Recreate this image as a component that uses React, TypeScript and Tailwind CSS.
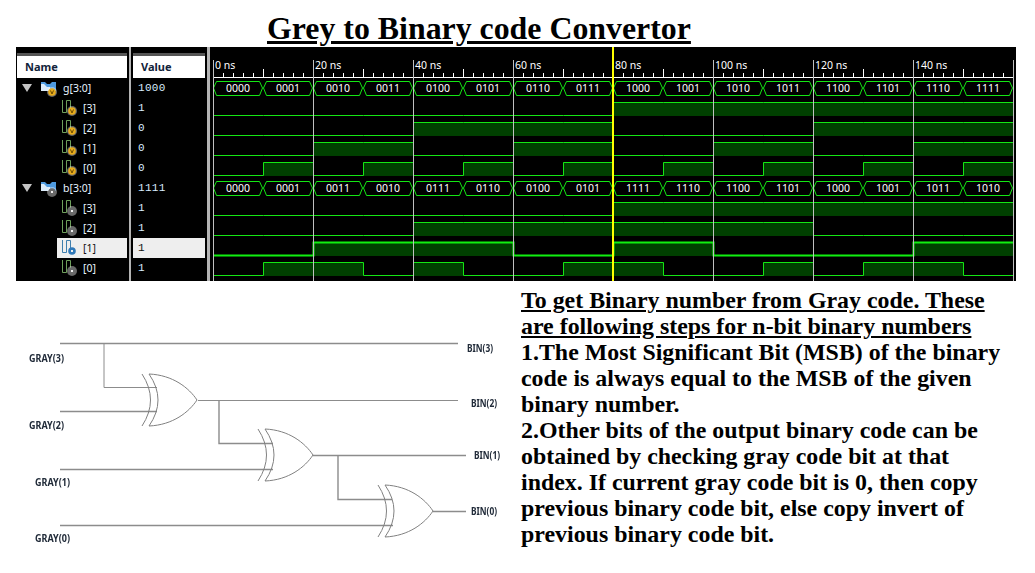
const GRAY = ['0000', '0001', '0010', '0011', '0100', '0101', '0110', '0111', '1000', '1001', '1010', '1011', '1100', '1101', '1110', '1111'];
const BIN = ['0000', '0001', '0011', '0010', '0111', '0110', '0100', '0101', '1111', '1110', '1100', '1101', '1000', '1001', '1011', '1010'];

const X0 = 213;
const STEP = 50;

type Row = { label: string; value: string; bus?: boolean; kind: 'g' | 'b'; selected?: boolean };

const rows: Row[] = [
  { label: 'g[3:0]', value: '1000', bus: true, kind: 'g' },
  { label: '[3]', value: '1', kind: 'g' },
  { label: '[2]', value: '0', kind: 'g' },
  { label: '[1]', value: '0', kind: 'g' },
  { label: '[0]', value: '0', kind: 'g' },
  { label: 'b[3:0]', value: '1111', bus: true, kind: 'b' },
  { label: '[3]', value: '1', kind: 'b' },
  { label: '[2]', value: '1', kind: 'b' },
  { label: '[1]', value: '1', kind: 'b', selected: true },
  { label: '[0]', value: '1', kind: 'b' },
];

function Coin({ kind, cx, cy, selected }: { kind: 'g' | 'b'; cx: number; cy: number; selected?: boolean }) {
  const fill = selected ? '#2f78b8' : kind === 'g' ? '#e8ac1c' : '#6a6a6a';
  return (
    <g>
      {!selected && <circle cx={cx} cy={cy} r="5" fill="#fff" opacity="0.4" />}
      <circle cx={cx} cy={cy} r="3.8" fill={fill} />
      {kind === 'g' ? (
        <path d={`M${cx - 1.5} ${cy - 1.5}L${cx} ${cy + 2}L${cx + 1.5} ${cy - 1.5}`} fill="none" stroke="#6b4a00" strokeWidth="1" />
      ) : (
        <rect x={cx - 1} y={cy - 1} width="2" height="2" fill="#eee" />
      )}
    </g>
  );
}

function BusIcon({ kind }: { kind: 'g' | 'b' }) {
  return (
    <svg width="18" height="18" viewBox="0 0 18 18" className="shrink-0">
      <path d="M1 3h4l2 2h3l2-2h4v9H1z" fill="#4f9be0" />
      <path d="M1 5h3l3 3h3v4H1z" fill="#dcecfa" />
      <Coin kind={kind} cx={12} cy={13} />
    </svg>
  );
}

function BitIcon({ kind, selected }: { kind: 'g' | 'b'; selected?: boolean }) {
  const line = selected ? '#3f7fae' : '#6fa05c';
  return (
    <svg width="18" height="18" viewBox="0 0 18 18" className="shrink-0">
      <path d="M2.5 1V13.5H6.5V1.5H10.5V10" fill="none" stroke={line} strokeWidth="1" />
      <Coin kind={kind} cx={12} cy={12} selected={selected} />
    </svg>
  );
}

function NameCell({ row }: { row: Row }) {
  return (
    <div className={`flex h-5 items-center ${row.bus ? 'pl-[5px]' : 'pl-[40px]'}`}>
      {row.bus ? (
        <>
          <span className="mr-[8px] h-0 w-0 border-x-[5px] border-t-[8px] border-x-transparent border-t-[#c4c4c4]" />
          <BusIcon kind={row.kind} />
          <span className="ml-[5px] pt-px text-[#e8f4ff]">{row.label}</span>
        </>
      ) : (
        <div className={`flex h-5 w-[70px] items-center pl-[3px] ${row.selected ? 'bg-[#eeeeee] text-[#111]' : 'text-[#e8f4ff]'}`}>
          <BitIcon kind={row.kind} selected={row.selected} />
          <span className="ml-[5px] pt-px">{row.label}</span>
        </div>
      )}
    </div>
  );
}

function Bus({ y, values }: { y: number; values: string[] }) {
  return (
    <g>
      {values.map((v, i) => {
        const a = X0 + i * STEP;
        const b = a + STEP;
        return (
          <g key={i}>
            <path
              d={`M${a + 0.5} ${y + 7}L${a + 3.5} ${y + 0.5}H${b - 3.5}L${b - 0.5} ${y + 7}L${b - 3.5} ${y + 14.5}H${a + 3.5}Z`}
              fill="none"
              stroke="#14e614"
            />
            <text x={a + 25} y={y + 11} textAnchor="middle" fontSize="10.5" fill="#fff" className="font-['Noto_Sans']">
              {v}
            </text>
          </g>
        );
      })}
    </g>
  );
}

function Bit({ low, values, bit, thick }: { low: number; values: string[]; bit: number; thick?: boolean }) {
  const high = low - 13;
  let d = '';
  const fills: number[] = [];
  values.forEach((v, i) => {
    const on = v[3 - bit] === '1';
    const x = X0 + i * STEP;
    const y = on ? high : low;
    if (on) fills.push(x);
    d += `${i === 0 ? 'M' : 'L'}${x + 0.5} ${y + 0.5}H${x + STEP + 0.5}`;
  });
  return (
    <g>
      {fills.map((x) => (
        <rect key={x} x={x} y={high} width={STEP} height={14} fill="#004000" />
      ))}
      <path d={d} fill="none" stroke={thick ? '#10f010' : '#14e614'} strokeWidth={thick ? 2 : 1} />
    </g>
  );
}

function Waves() {
  const ticks = Array.from({ length: 81 }, (_, i) => i);
  const majors = Array.from({ length: 9 }, (_, i) => i);
  return (
    <svg viewBox="210 47 806 234" width="806" height="234" className="block shrink-0">
      <rect x="210" y="47" width="806" height="234" fill="#000" />
      {ticks.map((i) => {
        const x = X0 + i * 10 + 0.5;
        const h = i % 5 === 0 ? 8 : 4;
        return <path key={i} d={`M${x} ${77 - h}V77`} stroke="#fff" />;
      })}
      <path d="M213 77.5H1013" stroke="#fff" />
      <Bus y={81} values={GRAY} />
      <Bus y={181} values={BIN} />
      {[3, 2, 1, 0].map((bit, i) => (
        <Bit key={bit} low={115 + i * 20} values={GRAY} bit={bit} />
      ))}
      {[3, 2, 1, 0].map((bit, i) => (
        <Bit key={bit} low={215 + i * 20} values={BIN} bit={bit} thick={bit === 1} />
      ))}
      {majors.map((i) => (
        <path key={i} d={`M${X0 + i * 100 + 0.5} 60V281`} stroke="#c0c0c0" />
      ))}
      {majors.slice(0, 8).map((i) => (
        <text key={i} x={X0 + i * 100 + 2} y={69} fontSize="10.5" fill="#fff" className="font-['Noto_Sans']">
          {i * 20} ns
        </text>
      ))}
      <rect x="612" y="47" width="2" height="234" fill="#ffff00" />
    </svg>
  );
}

function Xor({ x, y }: { x: number; y: number }) {
  // x, y: left top corner of the gate body
  return (
    <g transform={`translate(${x} ${y})`} fill="none" stroke="#808080" strokeWidth="1">
      <path d="M-7 0Q10 26 -7 52" />
      <path d="M0 0Q18 26 0 52" />
      <path d="M0 0C24 1 40 14 48 26C40 38 24 51 0 52" />
    </g>
  );
}

function Schematic() {
  const labels: [string, number, number, number][] = [
    ['GRAY(3)', 29, 362, 35],
    ['GRAY(2)', 29, 429, 35],
    ['GRAY(1)', 35, 486, 35],
    ['GRAY(0)', 35, 542, 35],
    ['BIN(3)', 467, 352, 26],
    ['BIN(2)', 471, 407, 26],
    ['BIN(1)', 474, 459, 26],
    ['BIN(0)', 471, 515, 26],
  ];
  return (
    <svg viewBox="0 288 510 285" width="510" height="285" className="block shrink-0 blur-[0.3px]">
      <g fill="none" stroke="#8c8c8c" strokeWidth="1">
        <path d="M60 343.5H458" strokeWidth="1.5" />
        <path d="M104 343.5V387.5H157" />
        <path d="M60 411.5H157" strokeWidth="1.5" />
        <path d="M198 400.5H458" />
        <path d="M219 400.5V443.5H273" strokeWidth="1.4" />
        <path d="M60 469.5H273" strokeWidth="1.5" />
        <path d="M313 455.5H466" strokeWidth="1.4" />
        <path d="M338 455.5V499.5H392" strokeWidth="1.4" />
        <path d="M60 525.5H393" strokeWidth="1.5" />
        <path d="M433 511.5H466" strokeWidth="1.4" />
      </g>
      <Xor x={149} y={374} />
      <Xor x={265} y={429} />
      <Xor x={385} y={485} />
      {labels.map(([t, x, y, w]) => (
        <text key={t} x={x} y={y} fontSize="10.5" fontWeight="700" fill="#222c3a" textLength={w} lengthAdjust="spacingAndGlyphs" className="font-['Noto_Sans']">
          {t}
        </text>
      ))}
    </svg>
  );
}

export default function App() {
  return (
    <div className="flex h-[573px] w-[1035px] flex-col overflow-hidden bg-white font-['Liberation_Serif',serif] text-black">
      <div className="flex h-[47px] items-end pl-[267px]">
        <h1 className="text-[31.85px] font-bold leading-[36px] whitespace-nowrap underline">Grey to Binary code Convertor</h1>
      </div>

      <div className="ml-4 flex h-[234px] w-[1000px] bg-black pl-px font-['Noto_Sans',sans-serif] text-[10.5px]">
        <div className="w-[110px] shrink-0">
          <div className="mt-[6px] h-[3px] bg-[#555]" />
          <div className="flex h-[22px] items-center bg-white pl-2 text-[11px] font-bold text-[#12233a]">Name</div>
          {rows.map((r, i) => (
            <NameCell key={i} row={r} />
          ))}
        </div>
        <div className="flex h-full w-[6px] justify-center">
          <div className="w-[2px] bg-[#b4b4b4]" />
        </div>
        <div className="w-[72px] shrink-0">
          <div className="mt-[6px] h-[3px] bg-[#555]" />
          <div className="flex h-[22px] items-center bg-white pl-2 text-[11px] font-bold text-[#12233a]">Value</div>
          {rows.map((r, i) => (
            <div
              key={i}
              className={`flex h-5 items-center pl-[5px] pt-px font-['Liberation_Mono'] text-[11px] tracking-[0.3px] ${r.selected ? 'bg-[#eeeeee] text-[#111]' : 'text-[#d8ecff]'}`}
            >
              {r.value}
            </div>
          ))}
        </div>
        <div className="flex h-full w-[5px] justify-end">
          <div className="w-[3px] bg-[#b4b4b4]" />
        </div>
        <Waves />
      </div>

      <div className="mt-[7px] flex">
        <Schematic />
        <div className="-mt-px ml-[11px] whitespace-nowrap text-[23.9px] font-bold leading-[26px]">
          <div className="underline">To get Binary number from Gray code. These</div>
          <div className="underline">are following steps for n-bit binary numbers</div>
          <div>1.The Most Significant Bit (MSB) of the binary</div>
          <div>code is always equal to the MSB of the given</div>
          <div>binary number.</div>
          <div>2.Other bits of the output binary code can be</div>
          <div>obtained by checking gray code bit at that</div>
          <div>index. If current gray code bit is 0, then copy</div>
          <div>previous binary code bit, else copy invert of</div>
          <div>previous binary code bit.</div>
        </div>
      </div>
    </div>
  );
}
